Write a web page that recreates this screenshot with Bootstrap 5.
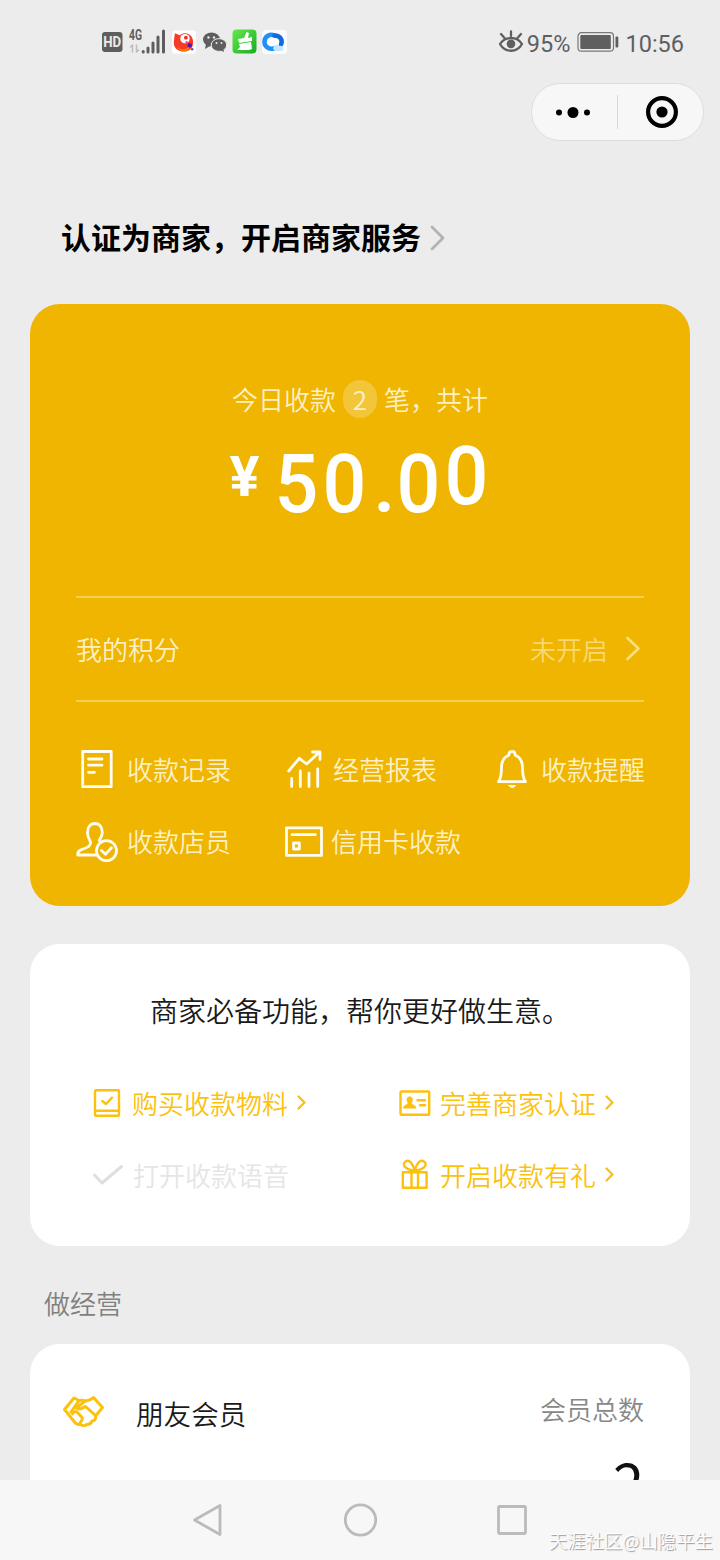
<!DOCTYPE html>
<html lang="zh-CN">
<head>
<meta charset="utf-8">
<meta name="viewport" content="width=device-width, initial-scale=1">
<title>收款小账本</title>
<link href="https://cdn.jsdelivr.net/npm/bootstrap@5.3.0/dist/css/bootstrap.min.css" rel="stylesheet">
<style>
body{background:#ececec;font-family:"Noto Sans CJK SC",sans-serif;color:#1a1a1a;font-size:26px;font-weight:350;line-height:36px}
svg{display:block;flex:none;fill:none;stroke-linecap:round;stroke-linejoin:round}
.phone{width:720px;height:1560px;overflow:hidden}
.status{height:83px;padding:0 36px 0 101px;color:#5f5f5f;font:23.5px/30px Roboto,sans-serif}
.capsule{width:173px;height:58px;margin-right:16px;border:1px solid #dedede;border-radius:29px;background:#f7f7f7}
.capsule-part{width:86px}
.capsule-rule{width:1px;height:34px;background:#d8d8d8}
.headline{height:163px;padding:30px 0 0 61px;font-size:30px;font-weight:700;color:#000}
.panel{margin:0 30px;border-radius:30px;background:#fff}
.gold{height:602px;padding:0 46px;background:#efb500;color:#fdf0c6}
.today{padding-top:75px;height:115px;line-height:40px}
.count{width:34px;height:38px;border-radius:19px;background:#f3c539;margin:1px 7px 0}
.amount{height:177px;padding-top:24px;font:500 82px/82px Roboto,sans-serif;color:#fff}
.digit{width:48px;text-align:center}
.digit>span{display:inline-block;transform:scaleX(.94)}
.point{width:26px;padding-left:5px;text-align:center}
.yen{width:33px;font-size:56px;margin:0 11px 0 152px;text-align:center;font-weight:700;line-height:68px}
.points{height:106px;border-top:2px solid #f5cf56;border-bottom:2px solid #f5cf56}
.faded{color:#f7d873}
.tools{display:grid;grid-template-columns:208px 209px auto;grid-auto-rows:72px;padding-top:31px;white-space:nowrap}
.tools svg{stroke:#fffdf3;stroke-width:2.8}
.needs{height:302px;margin-top:38px}
.needs h2{font-size:28px;font-weight:350;line-height:40px;margin:0;padding-top:46px;height:123px}
.need-grid{display:grid;grid-template-columns:306px auto;grid-auto-rows:72px;padding-left:62px;white-space:nowrap}
.need{color:#fcc10c}
.need svg{stroke:#fcc10c;stroke-width:2.4}
.need.done{color:#e5e5e5}
.need.done svg{stroke:#dfdfdf;stroke-width:3}
.section-name{height:98px;padding:39px 0 0 44px;color:#808080}
.members{height:180px;padding:46px 46px 0 32px}
.member-count{font-size:56px;font-weight:400;line-height:58px;color:#111;margin-top:25px}
.softkeys{height:80px;background:#f7f7f7}
.softkeys svg{stroke:#bbb;stroke-width:2.8}
.credit{right:7px;bottom:5px;font-size:18.4px;line-height:30px;color:#fff;text-shadow:1px 1px 1px #999;white-space:nowrap}
</style>
</head>
<body>
<div class="phone d-flex flex-column position-relative">
  <main class="flex-grow-1 overflow-hidden">
    <div class="status d-flex align-items-center">
      <svg width="22" height="22" viewBox="0 0 22 22"><rect x="1" y="1" width="20.5" height="20" rx="3" fill="#5e5e5e"/><text x="11.2" y="16.200" text-anchor="middle" font-family="Roboto" font-weight="700" font-size="14" textLength="18" lengthAdjust="spacingAndGlyphs" fill="#ebebeb">HD</text></svg>
      <svg class="ms-1" width="40" height="26" viewBox="0 0 40 26"><text x="2" y="11" font-family="Roboto" font-weight="700" font-size="14" textLength="13" lengthAdjust="spacingAndGlyphs" fill="#5e5e5e">4G</text><g stroke="#bbb" stroke-width="1.5"><path d="M5.5 16v7M3.500 18l2-2M9.500 16v7l2-2"/></g><g stroke="#5e5e5e" stroke-width="3" stroke-linecap="round"><path d="M16.2 22.500v.500M21 19v4M26 14v9M31 8v15M36.500 2v21"/></g></svg>
      <svg style="margin-left:5px" width="24" height="24" viewBox="0 0 25 24"><rect width="25" height="24" rx="3" fill="#fff"/><path d="M3 3l5 2c7-5 14 0 14 7s-4 10-10 10S1 18 2 11Z" fill="#f63b27"/><path d="M5 17c4 4 11 3 14-2l-1 4c-3 4-10 4-13-2Z" fill="#ff7a00"/><circle cx="13.500" cy="8.500" r="4.900" fill="#fff"/><circle cx="14.500" cy="7.500" r="2" fill="#e9322b"/><path d="M15 12l4 4" stroke="#f03c8c" stroke-width="2"/><circle cx="18.500" cy="15.500" r="2.400" fill="#5a1aa5"/><circle cx="21" cy="19.500" r="1.300" fill="#7840c0"/></svg>
      <svg style="margin-left:6px" width="25" height="24" viewBox="0 0 25 24"><g fill="#5e5e5e"><ellipse cx="9.500" cy="9.500" rx="8.500" ry="7"/><path d="M4 14l-1 5 5-3Z"/><ellipse cx="17" cy="15" rx="7.800" ry="6.400" stroke="#ebebeb"/><path d="M18 20l4 2-1-4Z"/></g><g fill="#ebebeb"><circle cx="6.500" cy="7.500" r="1.200"/><circle cx="12" cy="7.500" r="1.200"/><circle cx="14.500" cy="13" r="1"/><circle cx="19.500" cy="13" r="1"/></g></svg>
      <svg style="margin-left:5px" width="25" height="25" viewBox="0 0 25 25"><defs><linearGradient id="leaf" x2="1" y2="1"><stop stop-color="#65e84b"/><stop offset="1" stop-color="#19ac25"/></linearGradient></defs><rect x=".5" y=".5" width="24" height="24" rx="4" fill="url(#leaf)"/><path d="M14.500 3l2.500 1-1 5 4-1v4L7 14l-1-4 6-1ZM7 15l12-2 1 7-3 1H5l3-3Z" fill="#fff"/></svg>
      <svg style="margin-left:5px" width="25" height="24" viewBox="0 0 25 24"><rect width="25" height="24" rx="4" fill="#fafcff"/><path d="M12.500 5.500a7 7 0 1 0-1 13" stroke="#2090f8" stroke-width="4.500"/><path d="M12.500 5.500c6 0 8.500 5 6.500 9" stroke="#126ade" stroke-width="4.500"/><path d="M11 19c1-5 5-5 6-3 3-1 5 1 4 4-3 2-8 1-10-1Z" fill="#bfe8ff"/></svg>
      <div class="d-flex align-items-center ms-auto">
        <svg width="26" height="26" viewBox="0 0 26 26" stroke="#5f5f5f" stroke-width="2.300"><path d="M2 15c5-8 17-8 22 0-5 9-17 9-22 0ZM13 7V2.500M6.500 9L3 5M19.500 9L23 5"/><circle cx="13" cy="14.800" r="3.200" fill="#5f5f5f"/></svg>
        <span class="pt-1" style="margin-left:3px;line-height:28px">95%</span>
        <svg style="margin:0 6px 0 6px" width="43" height="22" viewBox="0 0 43 22"><rect x="2" y="1.700" width="35.500" height="18.500" rx="3.500" stroke="#777" stroke-width="1.200"/><rect x="4.300" y="4" width="30.500" height="14" rx="1" fill="#5f5f5f"/><rect x="39.500" y="5.500" width="2.800" height="11" rx="1" fill="#5f5f5f"/></svg>
        <span class="pt-1" style="line-height:28px">10:56</span>
      </div>
    </div>
    <div class="capsule d-flex align-items-center ms-auto">
      <div class="capsule-part d-flex justify-content-center"><svg width="42" height="14" viewBox="0 0 42 14"><g fill="#000"><circle cx="6" cy="7.500" r="3"/><circle cx="20" cy="7.500" r="5.500"/><circle cx="34" cy="7.500" r="3"/></g></svg></div>
      <div class="capsule-rule"></div>
      <div class="capsule-part d-flex justify-content-center ps-1"><svg width="34" height="34" viewBox="0 0 34 34"><circle cx="17" cy="17" r="13.900" stroke="#000" stroke-width="4.200"/><circle cx="17" cy="17" r="5.600" fill="#000"/></svg></div>
    </div>
    <div class="headline"><div class="d-flex align-items-center" style="height:130px"><span>认证为商家，开启商家服务</span><svg class="ms-2 mt-1" width="18" height="28" viewBox="0 0 18 28" stroke="#b2b2b2" stroke-width="2.800"><path d="M3 3l11 11L3 25"/></svg></div></div>

    <section class="panel gold">
      <div class="today d-flex justify-content-center"><span>今日收款</span><span class="count d-flex align-items-center justify-content-center">2</span><span>笔，共计</span></div>
      <div class="amount d-flex"><span class="yen">¥</span><span class="digit"><span>5</span></span><span class="digit"><span>0</span></span><span class="point">.</span><span class="digit"><span>0</span></span><span class="digit position-relative" style="top:-8px"><span>0</span></span></div>
      <div class="points d-flex align-items-center justify-content-between"><span>我的积分</span><span class="faded d-flex align-items-center">未开启<svg style="margin-left:15px" width="21" height="28" viewBox="0 0 21 28" stroke="#f8de86" stroke-width="2.600"><path d="M4.500 3l11 10.500-11 10.500"/></svg></span></div>
      <div class="tools">
        <div class="d-flex align-items-center"><svg width="51" height="48" viewBox="0 0 51 48"><rect x="6.700" y="6.500" width="28.500" height="35.200"/><path d="M12.500 14H26M12.500 20.200H26M12.500 27.300H18.500"/></svg>收款记录</div>
        <div class="d-flex align-items-center"><svg width="49" height="48" viewBox="0 0 49 48"><path d="M4.700 26L15.300 13.300l7.400 5.700L35 7.500M28.500 7H36v7.500M7.700 33.500v8M16.300 26v15.500M25 28.200v13.300M33.700 24v17.500"/></svg>经营报表</div>
        <div class="d-flex align-items-center"><svg width="48" height="48" viewBox="0 0 48 48"><path d="M5.500 36.700h27c-3-3.500-2.800-8-3-14.700-.2-6.500-3-10-7.300-11.700C22.200 5 15.800 5 15.800 10.300 11.500 12 8.700 15.500 8.500 22c-.2 6.700 0 11.200-3 14.700Z"/><path d="M16 40.500h6.500c-1.500 2.800-5 2.800-6.500 0Z" fill="#fffdf3" stroke-width="1"/></svg>收款提醒</div>
        <div class="d-flex align-items-center"><svg width="51" height="48" viewBox="0 0 51 48"><path d="M20.500 38H1.800c-.5-3 1.200-4.500 4-5.500 6-2 9.200-3.500 8.700-7.500-1.500-3.500-3-5-3-9.500 0-5.500 2.900-9 7.400-9s7.400 3.500 7.400 9c0 3-1.500 5-3 8"/><circle cx="30.500" cy="33.700" r="10"/><path d="M25.500 33.500l4 3.800 6-6.500"/></svg>收款店员</div>
        <div class="d-flex align-items-center"><svg width="47" height="48" viewBox="0 0 47 48"><rect x="2.500" y="10.800" width="35" height="27.600"/><path d="M8 17.700h23.300"/><rect x="9.500" y="26" width="5.800" height="6"/></svg>信用卡收款</div>
      </div>
    </section>

    <section class="panel needs">
      <h2 class="text-center">商家必备功能，帮你更好做生意。</h2>
      <div class="need-grid">
        <div class="need d-flex align-items-center"><svg width="40" height="32" viewBox="0 0 40 32"><rect x="3" y="3.300" width="24" height="25.400" rx="1"/><path d="M3 23.700h24M10.300 14l3.700 3 6-6.300"/></svg>购买收款物料<svg style="margin-left:7px" width="14" height="20" viewBox="0 0 14 20"><path d="M3.500 3.500l6 6-6 6"/></svg></div>
        <div class="need d-flex align-items-center"><svg width="42" height="32" viewBox="0 0 42 32"><rect x="2.500" y="4.500" width="28.700" height="23.300" rx="1"/><path d="M11.700 9.800c-3.500 0-3.500 4-1.700 6 .3 2-4.500 2-4.700 5.400h12.800c-.2-3.400-5-3.400-4.700-5.400 1.800-2 1.800-6-1.700-6Z" fill="#fcc10c" stroke-width=".5"/><path d="M19.500 13.300H27M22 18.200h5"/></svg>完善商家认证<svg style="margin-left:7px" width="14" height="20" viewBox="0 0 14 20"><path d="M3.500 3.500l6 6-6 6"/></svg></div>
        <div class="need done d-flex align-items-center"><svg width="41" height="32" viewBox="0 0 41 32"><path d="M2.500 16l7.500 8L29.500 7.500"/></svg>打开收款语音</div>
        <div class="need d-flex align-items-center"><svg width="42" height="32" viewBox="0 0 42 32"><path d="M4.800 13.300h23.800v15.500H4.800ZM13.500 13.300v15.500M20 13.300v15.500M16.700 11.500C7 11 3.500 5 7.500 2.500S15 5 16.700 11.500C18.500 5 22 0 26 2.500S26.500 11 16.700 11.500Z"/></svg>开启收款有礼<svg style="margin-left:7px" width="14" height="20" viewBox="0 0 14 20"><path d="M3.500 3.500l6 6-6 6"/></svg></div>
      </div>
    </section>

    <div class="section-name">做经营</div>
    <section class="panel members d-flex align-items-start">
      <svg width="44" height="44" viewBox="0 0 44 44" stroke="#fcc10c" stroke-width="3"><path d="M2.500 19.500L12 8l5 2.500c2-.5 4-.5 6 .5 3 0 5-1 8.500-3.500L40.500 17.500 33.500 26c1 3-1 5-3.500 5-1 3-3 3.500-5 3.500-2 1.500-5 1.500-7-.500-2 1-4 0-5.500-2L2.500 19.500Z"/><path d="M17 10.500L9 22M23 11l-8.500 7c3.500 3 6-.5 9-1.500l10 9"/><path d="M10.500 24c1-3 3.500-3 5.500-1l4 4.500c1 2 0 3-1 4l-1.500 2.500"/></svg>
      <span style="margin:5px 0 0 30px;font-size:27.600px">朋友会员</span>
      <div class="ms-auto text-end" style="color:#888;margin-top:1px"><div>会员总数</div><div class="member-count">2</div></div>
    </section>
  </main>
  <nav class="softkeys flex-shrink-0 d-flex align-items-center justify-content-center">
    <svg width="36" height="36" viewBox="0 0 36 36"><path d="M5.500 18L31 3.500v29Z"/></svg>
    <svg style="margin:0 116px 0 118px" width="36" height="36" viewBox="0 0 36 36"><circle cx="17.500" cy="18" r="15.200"/></svg>
    <svg width="36" height="36" viewBox="0 0 36 36"><rect x="3.500" y="4.500" width="27" height="27" rx="1"/></svg>
  </nav>
  <div class="credit position-absolute">天涯社区@山隐平生</div>
</div>
<script src="https://cdn.jsdelivr.net/npm/bootstrap@5.3.0/dist/js/bootstrap.bundle.min.js"></script>
</body>
</html>
